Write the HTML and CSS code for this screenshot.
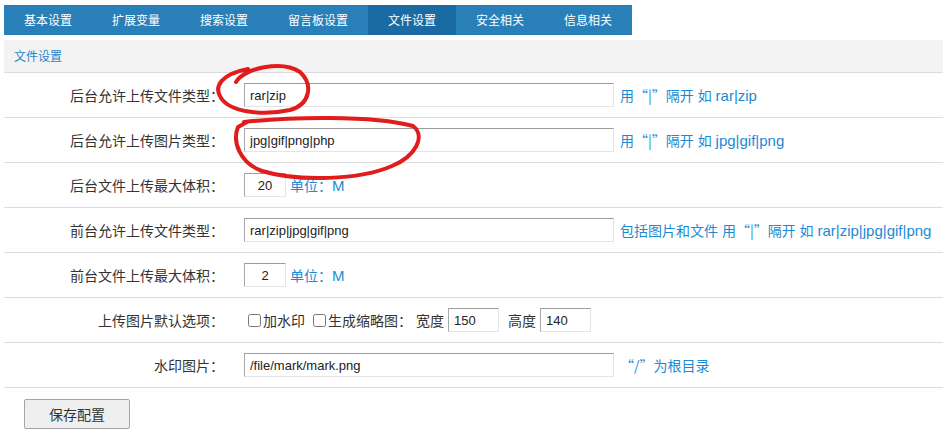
FILE: index.html
```html
<!DOCTYPE html>
<html lang="zh-CN">
<head>
<meta charset="utf-8">
<title>文件设置</title>
<link rel="stylesheet" href="styles.css">
</head>
<body>
<div class="page">
  <ul class="tabs">
    <li class="tab">基本设置</li>
    <li class="tab">扩展变量</li>
    <li class="tab">搜索设置</li>
    <li class="tab">留言板设置</li>
    <li class="tab active">文件设置</li>
    <li class="tab">安全相关</li>
    <li class="tab">信息相关</li>
  </ul>
  <div class="panel">
    <div class="panel-head">文件设置</div>
    <div class="form">
      <div class="row">
        <div class="lbl">后台允许上传文件类型：</div>
        <div class="fld"><input class="txt long" type="text" value="rar|zip"><span class="hint">用<span class="q">“|”</span>隔开 如 <span class="en">rar|zip</span></span></div>
      </div>
      <div class="row">
        <div class="lbl">后台允许上传图片类型：</div>
        <div class="fld"><input class="txt long" type="text" value="jpg|gif|png|php"><span class="hint">用<span class="q">“|”</span>隔开 如 <span class="en">jpg|gif|png</span></span></div>
      </div>
      <div class="row">
        <div class="lbl">后台文件上传最大体积：</div>
        <div class="fld"><input class="txt num" type="text" value="20"><span class="hint unit">单位：<span class="en">M</span></span></div>
      </div>
      <div class="row">
        <div class="lbl">前台允许上传文件类型：</div>
        <div class="fld"><input class="txt long" type="text" value="rar|zip|jpg|gif|png"><span class="hint">包括图片和文件 用<span class="q">“|”</span>隔开 如 <span class="en">rar|zip|jpg|gif|png</span></span></div>
      </div>
      <div class="row">
        <div class="lbl">前台文件上传最大体积：</div>
        <div class="fld"><input class="txt num" type="text" value="2"><span class="hint unit">单位：<span class="en">M</span></span></div>
      </div>
      <div class="row">
        <div class="lbl">上传图片默认选项：</div>
        <div class="fld">
          <label class="chk"><input type="checkbox">加水印</label>
          <label class="chk"><input type="checkbox">生成缩略图：</label>
          <span class="dim">宽度</span><input class="txt size" type="text" value="150">
          <span class="dim gap">高度</span><input class="txt size" type="text" value="140">
        </div>
      </div>
      <div class="row">
        <div class="lbl">水印图片：</div>
        <div class="fld"><input class="txt long" type="text" value="/file/mark/mark.png"><span class="hint"><span class="q">“/”</span>为根目录</span></div>
      </div>
    </div>
    <div class="actions"><button class="btn" type="button">保存配置</button></div>
  </div>
  <svg class="marks" width="943" height="441" viewBox="0 0 943 441" aria-hidden="true">
    <path d="M236 82 C244 68 282 60 300 72 C313 84 311 104 290 110 C262 116 230 112 221 98 C213 86 222 74 248 69" />
    <path d="M244 122 C290 117 372 115 413 126 C426 136 416 156 392 166 C360 180 298 182 262 171 C240 163 232 142 238 127 L247 122" />
  </svg>
</div>
</body>
</html>
```

FILE: styles.css
```css
* { box-sizing: border-box; }

html, body {
  margin: 0;
  padding: 0;
  background: #fff;
}

body {
  font-family: "Liberation Sans", "Noto Sans CJK SC", sans-serif;
  font-size: 14px;
  color: #333;
}

.page {
  position: relative;
  padding: 5px 0 0 4px;
  height: 441px;
  overflow: hidden;
}

.tabs {
  display: flex;
  width: 628px;
  height: 30px;
  margin: 0;
  padding: 0;
  list-style: none;
  background: #2980b9;
}

.tab {
  padding: 0 20px;
  height: 30px;
  line-height: 30px;
  font-size: 12px;
  color: #fff;
  font-family: "Noto Sans CJK SC", sans-serif;
}

.tab.active {
  background: #1a6ba3;
}

.panel {
  margin-top: 5px;
}

.panel-head {
  height: 33px;
  line-height: 32px;
  padding-left: 10px;
  background: #f3f3f3;
  border-bottom: 1px solid #dcdcdc;
  font-size: 12px;
  color: #1f86cf;
  font-family: "Noto Sans CJK SC", sans-serif;
}

.row {
  display: grid;
  grid-template-columns: 220px 1fr;
  height: 45px;
  border-bottom: 1px solid #dcdcdc;
  align-items: center;
}

.lbl {
  text-align: right;
  font-family: "Noto Sans CJK SC", sans-serif;
  color: #333;
}

.fld {
  display: flex;
  align-items: center;
  padding-left: 20px;
  white-space: nowrap;
}

.txt {
  height: 24px;
  margin: 0;
  padding: 0 5px;
  border: 1px solid #e4e4e4;
  border-top-color: #9c9c9c;
  border-left-color: #a8a8a8;
  font-family: "Liberation Sans", sans-serif;
  font-size: 13px;
  color: #222;
  background: #fff;
  outline: none;
}

.txt.long { width: 370px; }
.txt.num { width: 42px; text-align: center; }
.txt.size { width: 51px; }

.hint {
  margin-left: 6px;
  color: #1c89d4;
}

.hint.unit { margin-left: 4px; }

.en {
  font-family: "Liberation Sans", sans-serif;
  font-size: 15px;
}

.q {
  font-family: "Noto Sans CJK SC", sans-serif;
}

.chk {
  display: flex;
  align-items: center;
  margin-right: 4px;
}

.chk input {
  width: 13px;
  height: 13px;
  margin: 0 2px 0 4px;
}

.dim { margin-right: 4px; }
.dim.gap { margin-left: 9px; }

.actions {
  padding: 11px 20px;
}

.btn {
  width: 106px;
  height: 30px;
  background: #efefef;
  border: 1px solid #a5a5a5;
  border-radius: 2px;
  font-family: "Noto Sans CJK SC", sans-serif;
  font-size: 14px;
  color: #333;
  padding: 0;
}

.marks {
  position: absolute;
  left: 0;
  top: 0;
  pointer-events: none;
}

.marks path {
  fill: none;
  stroke: #e11c1c;
  stroke-width: 4;
  stroke-linecap: round;
  stroke-linejoin: round;
}
```
